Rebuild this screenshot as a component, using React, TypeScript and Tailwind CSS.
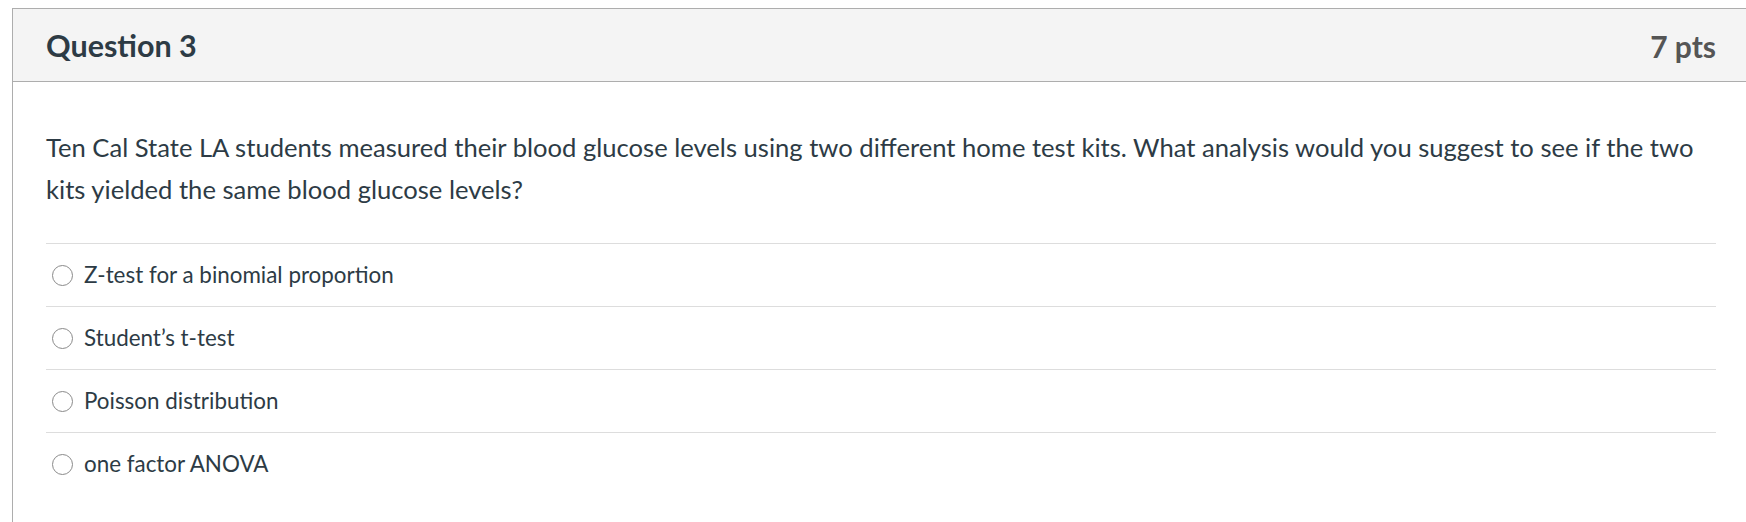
export default function App() {
  const options = [
    "Z-test for a binomial proportion",
    "Student\u2019s t-test",
    "Poisson distribution",
    "one factor ANOVA",
  ];

  return (
    <div className="h-[522px] w-full overflow-hidden bg-white pt-[8px] pl-[12px] font-['Lato','Liberation_Sans',sans-serif] text-[#2d3b45]">
      <div className="h-full w-[1740px] border-t border-l border-[#adadad]">
        <div className="flex h-[73px] items-center justify-between border-b border-[#adadad] bg-[#f4f4f4] pt-[2px] pr-[36px] pl-[33px]">
          <h2 className="text-[30.5px] font-bold text-[#2d3b45]">Question 3</h2>
          <span className="text-[30px] font-bold text-[#555555]">7 pts</span>
        </div>

        <div className="pt-[44px] pr-[30px] pl-[33px]">
          <p className="text-[25.6px] leading-[42px]">
            Ten Cal State LA students measured their blood glucose levels using two different home test kits. What analysis would you suggest to see if the two kits yielded the same blood glucose levels?
          </p>

          <div className="mt-[33px] w-[1670px]">
            {options.map((opt) => (
              <label key={opt} className="flex h-[63px] items-center border-t border-[#dddddd]">
                <span className="ml-[6px] h-[21px] w-[21px] shrink-0 rounded-full border border-[#8a8a8a] bg-white" />
                <span className="ml-[11px] text-[22.4px]">{opt}</span>
              </label>
            ))}
          </div>
        </div>
      </div>
    </div>
  );
}
